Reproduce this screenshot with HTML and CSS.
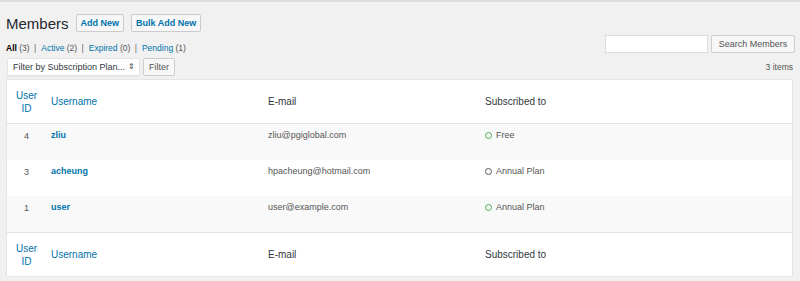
FILE: index.html
```html
<!DOCTYPE html>
<html lang="en">
<head>
    <meta charset="UTF-8">
    <title>Members</title>
    <link rel="stylesheet" href="styles.css">
</head>
<body>
    <div class="topbar"></div>
    <div class="wrap">
        <div class="titleRow">
            <h1>Members</h1>
            <a class="pageButton">Add New</a>
            <a class="pageButton">Bulk Add New</a>
        </div>
        <div class="toolbar">
            <div class="toolsLeft">
                <ul class="views">
                    <li><b>All</b> <span class="count">(3)</span> <span class="sep">|</span></li>
                    <li><a>Active</a> <span class="count">(2)</span> <span class="sep">|</span></li>
                    <li><a>Expired</a> <span class="count">(0)</span> <span class="sep">|</span></li>
                    <li><a>Pending</a> <span class="count">(1)</span></li>
                </ul>
                <div class="filterRow">
                    <div class="select">Filter by Subscription Plan... <span class="arrows">&#8661;</span></div>
                    <button class="button">Filter</button>
                </div>
            </div>
            <div class="toolsRight">
                <div class="searchRow">
                    <input class="searchInput" type="text">
                    <button class="button searchButton">Search Members</button>
                </div>
                <div class="items">3 items</div>
            </div>
        </div>
        <table class="members">
            <thead>
                <tr>
                    <th class="colId"><a>User<br>ID</a></th>
                    <th class="colUser"><a>Username</a></th>
                    <th class="colMail">E-mail</th>
                    <th>Subscribed to</th>
                </tr>
            </thead>
            <tbody>
                <tr class="alt">
                    <td class="colId">4</td>
                    <td class="colUser"><a>zliu</a></td>
                    <td>zliu@pgiglobal.com</td>
                    <td><span class="dot active"></span>Free</td>
                </tr>
                <tr>
                    <td class="colId">3</td>
                    <td class="colUser"><a>acheung</a></td>
                    <td>hpacheung@hotmail.com</td>
                    <td><span class="dot"></span>Annual Plan</td>
                </tr>
                <tr class="alt">
                    <td class="colId">1</td>
                    <td class="colUser"><a>user</a></td>
                    <td>user@example.com</td>
                    <td><span class="dot active"></span>Annual Plan</td>
                </tr>
            </tbody>
            <tfoot>
                <tr>
                    <th class="colId"><a>User<br>ID</a></th>
                    <th class="colUser"><a>Username</a></th>
                    <th class="colMail">E-mail</th>
                    <th>Subscribed to</th>
                </tr>
            </tfoot>
        </table>
    </div>
</body>
</html>
```

FILE: styles.css
```css
body {
    margin: 0;
    background: #f1f1f1;
    font-family: "Liberation Sans", Arial, sans-serif;
    color: #444;
}

a {
    color: #0073aa;
}

.topbar {
    height: 2px;
    background: #dcdcdc;
}

.wrap {
    padding: 0 5px 0 6px;
}

.titleRow {
    display: flex;
    align-items: center;
    gap: 7px;
    margin-top: 12px;
    height: 18px;
}

.titleRow h1 {
    margin: 0;
    font-size: 15px;
    font-weight: 400;
    color: #23282d;
}

.pageButton {
    height: 16px;
    line-height: 16px;
    padding: 0 4px;
    border: 1px solid #ccc;
    border-radius: 2px;
    background: #f7f7f7;
    font-size: 9px;
    font-weight: 600;
}

.toolbar {
    display: flex;
    justify-content: space-between;
    margin-top: 3px;
}

.views {
    list-style: none;
    margin: 8px 0 0;
    padding: 0;
    display: flex;
    gap: 3px;
    font-size: 8.5px;
    line-height: 10px;
}

.views b {
    color: #000;
    font-weight: 600;
}

.count {
    color: #555;
}

.sep {
    color: #666;
    margin: 0 2px;
}

.filterRow {
    display: flex;
    gap: 3px;
    margin-top: 5px;
}

.select {
    width: 122px;
    height: 16px;
    line-height: 16px;
    padding: 0 4px 0 5px;
    margin-left: 1px;
    background: #fff;
    border: 1px solid #e4e4e4;
    border-radius: 1px;
    font-size: 9px;
    color: #32373c;
    display: flex;
    justify-content: space-between;
    box-shadow: 0 1px 1px rgba(0, 0, 0, 0.04);
}

.arrows {
    font-size: 8px;
}

.button {
    height: 18px;
    padding: 0 5px;
    border: 1px solid #ccc;
    border-radius: 2px;
    background: #f7f7f7;
    color: #555;
    font-family: inherit;
    font-size: 9px;
}

.toolsRight {
    display: flex;
    flex-direction: column;
    align-items: flex-end;
}

.searchRow {
    display: flex;
    gap: 3px;
}

.searchInput {
    width: 101px;
    height: 16px;
    margin: 0;
    padding: 0;
    border: 1px solid #ddd;
    background: #fff;
}

.searchButton {
    width: 84px;
}

.items {
    margin-top: 9px;
    padding-right: 2px;
    font-size: 8.5px;
    color: #555;
}

.members {
    width: 787px;
    margin-top: 3px;
    border-collapse: collapse;
    background: #fff;
    border: 1px solid #e5e5e5;
    box-shadow: 0 1px 1px rgba(0, 0, 0, 0.04);
}

.members th {
    font-weight: 400;
    font-size: 10px;
    text-align: left;
    color: #32373c;
    height: 43px;
    padding: 0;
}

.members thead th {
    border-bottom: 1px solid #e1e1e1;
}

.members tfoot th {
    border-top: 1px solid #e1e1e1;
}

.members td {
    font-size: 9px;
    vertical-align: top;
    padding: 6px 0 0;
    height: 30px;
    color: #555;
}

.members tr.alt {
    background: #f9f9f9;
}

.members .colId {
    width: 39px;
    text-align: center;
    line-height: 13px;
}

.members .colUser {
    width: 217px;
    padding-left: 5px;
}

.members td.colUser a {
    font-weight: 700;
}

.members .colMail {
    width: 217px;
}

.dot {
    display: inline-block;
    width: 5px;
    height: 5px;
    border: 1.5px solid #555;
    border-radius: 50%;
    margin-right: 4px;
    vertical-align: -1px;
}

.dot.active {
    border-color: #46b450;
}
```
